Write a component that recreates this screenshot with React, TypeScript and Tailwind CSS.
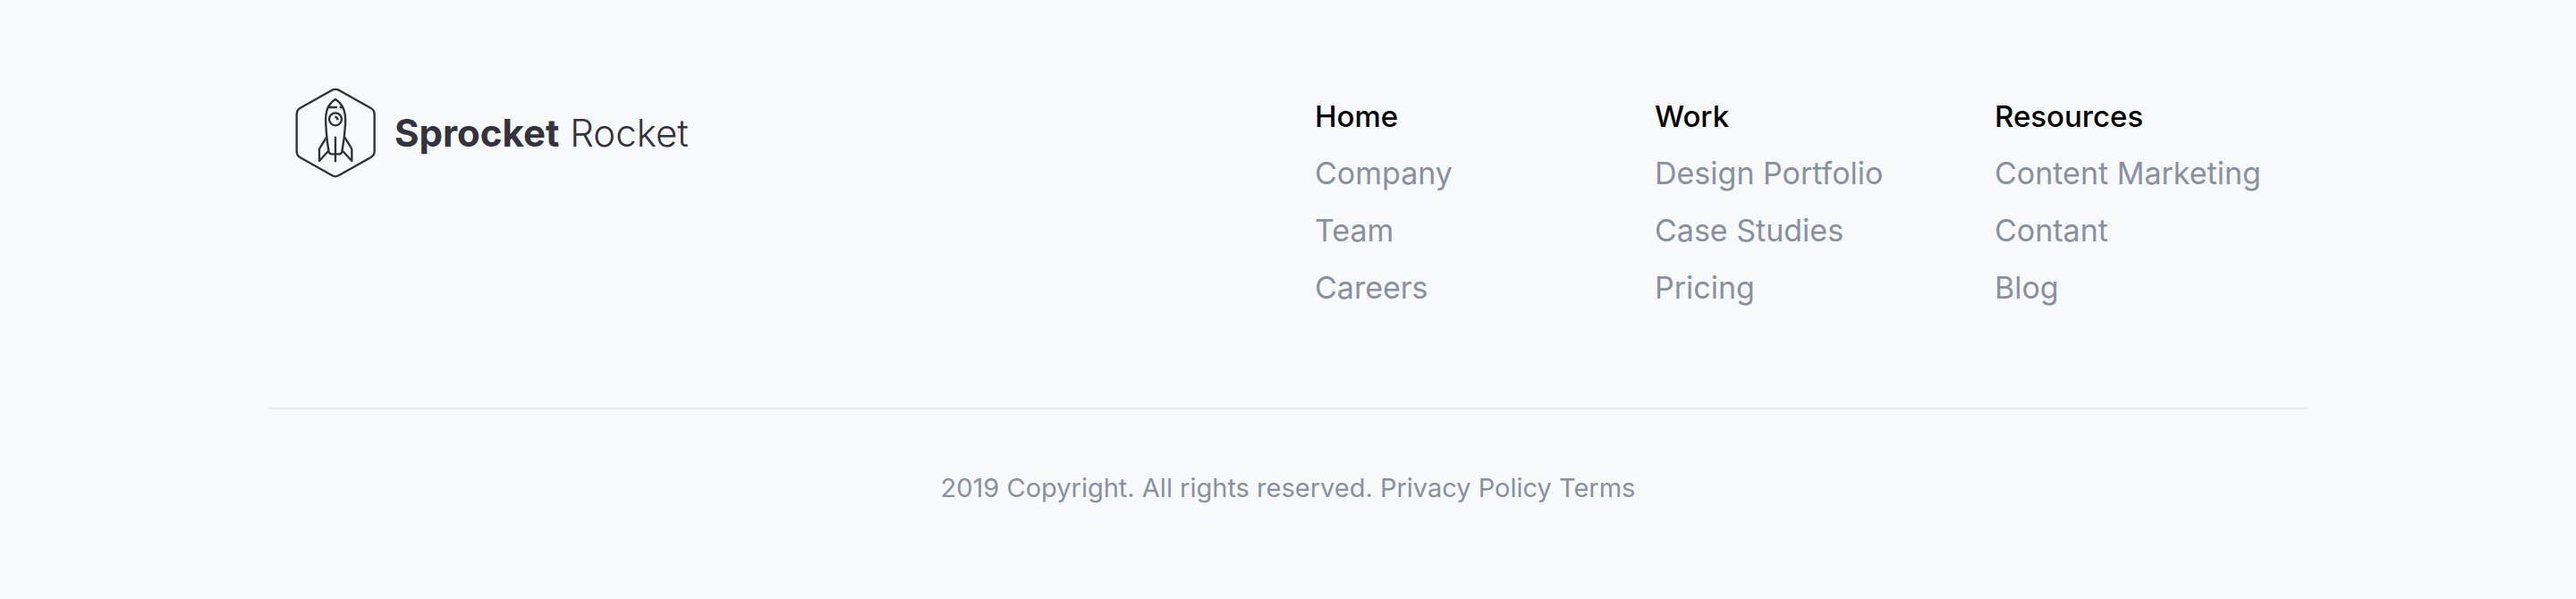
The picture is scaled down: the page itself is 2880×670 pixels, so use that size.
type LinkColumn = { title: string; links: string[] };

const columns: LinkColumn[] = [
  { title: "Home", links: ["Company", "Team", "Careers"] },
  { title: "Work", links: ["Design Portfolio", "Case Studies", "Pricing"] },
  { title: "Resources", links: ["Content Marketing", "Contant", "Blog"] },
];

function RocketMark() {
  return (
    <svg
      viewBox="60 57 270 303"
      className="h-[101px] w-[90px] shrink-0"
      fill="none"
      stroke="#2f3038"
      strokeWidth="7"
      strokeLinecap="butt"
      strokeLinejoin="round"
      aria-hidden="true"
    >
      <path d="M184 65Q195 60 206 65L314 126Q326 133 326 147V270Q326 284 314 291L206 352Q195 358 184 352L76 291Q65 284 65 270V147Q65 133 76 126Z" />
      <path d="M195 96C186 101 178 110 171 121C163 138 161 160 163 184C165 215 168 245 173 272Q175 280 183 280H207Q215 280 217 272C222 245 226 215 228 184C230 160 228 138 219 121C212 110 204 101 195 96Z" />
      <path d="M171 123H201M209 123H219" />
      <circle cx="195" cy="163" r="21" />
      <path d="M193 155Q202 156 203 166" />
      <path d="M195 221V307" />
      <path d="M165 224L143 259Q141 262 141 266V303L172 269" />
      <path d="M226 224L248 259Q250 262 250 266V303L219 269" />
    </svg>
  );
}

export default function App() {
  return (
    <footer className="min-h-screen bg-[#f8f9fb] px-8 pt-[98px] pb-20 font-['Inter',sans-serif] text-[#8791a1]">
      <div className="mx-auto max-w-[2280px]">
        <div className="grid grid-cols-2 border-b-2 border-[#e9eaec] pb-[102px]">
          <div className="px-[30px]">
            <a href="#" className="inline-flex items-center gap-[21px] text-[#33323d]">
              <RocketMark />
              <span className="text-[42px] leading-[48px] font-light">
                <strong className="font-bold">Sprocket</strong> Rocket
              </span>
            </a>
          </div>
          <div className="grid grid-cols-3">
            {columns.map((column) => (
              <nav key={column.title} aria-label={column.title} className="px-[30px] text-[34px] leading-[64px] whitespace-nowrap">
                <h2 className="text-[33px] leading-[64px] font-medium text-black">{column.title}</h2>
                <ul>
                  {column.links.map((link) => (
                    <li key={link}>
                      <a href="#">{link}</a>
                    </li>
                  ))}
                </ul>
              </nav>
            ))}
          </div>
        </div>
        <p className="pt-[64px] text-center text-[29px] leading-[48px]">
          2019 Copyright. All rights reserved. <a href="#">Privacy Policy</a> <a href="#">Terms</a>
        </p>
      </div>
    </footer>
  );
}
